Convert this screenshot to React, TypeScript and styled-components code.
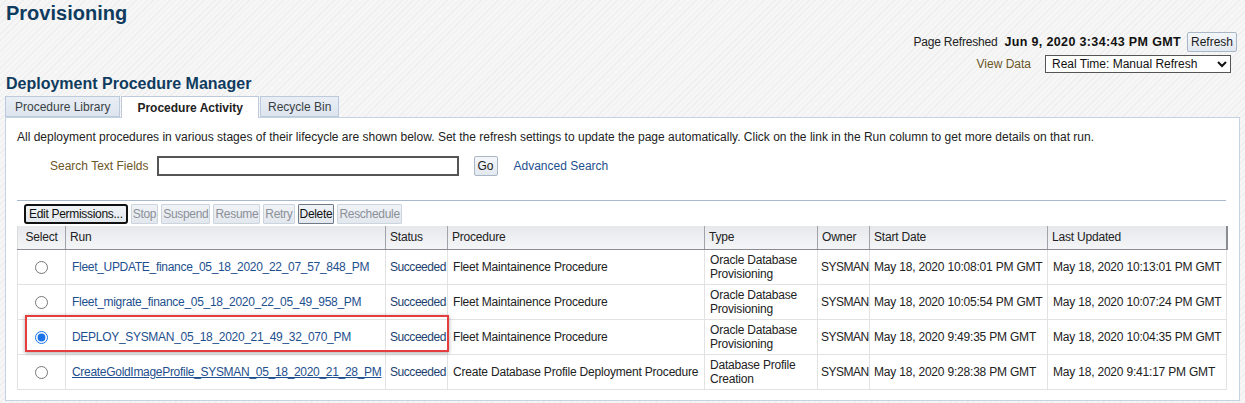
import React from "react";
import styled, { createGlobalStyle } from "styled-components";

const GlobalStyle = createGlobalStyle`
  html, body { margin: 0; padding: 0; }
  body {
    font-family: "Liberation Sans", Arial, sans-serif;
    font-size: 12px;
    color: #222;
    background-color: #f3f3f3;
    background-image: repeating-linear-gradient(135deg, #eeeeee 0 1px, #f6f6f6 1px 4px);
    width: 1245px;
    height: 403px;
    overflow: hidden;
  }
`;

const Page = styled.div`
  padding: 0 5px;
`;

const Title = styled.h1`
  margin: 0;
  padding: 1px 0 0 1px;
  font-size: 20px;
  line-height: 24px;
  font-weight: bold;
  color: #0f3b5f;
`;

const RefreshBlock = styled.div`
  display: flex;
  flex-direction: column;
  align-items: flex-end;
  margin-top: 7px;
  padding-right: 3px;
`;

const RefreshRow = styled.div<{ $inset?: number }>`
  display: flex;
  align-items: center;
  height: 20px;
  padding-right: ${(p) => p.$inset ?? 0}px;
  & + & { margin-top: 3px; height: 18px; }
`;

const Muted = styled.span`
  color: #222;
  letter-spacing: -0.2px;
  margin-right: 7px;
`;

const Stamp = styled.span`
  font-weight: bold;
  font-size: 12.5px;
  letter-spacing: 0.35px;
  color: #111;
  margin-right: 6px;
`;

const FieldLabel = styled.span`
  color: #6b5727;
  margin-right: 14px;
`;

const SmallButton = styled.button`
  font-family: "Liberation Sans", Arial, sans-serif;
  font-size: 12px;
  height: 20px;
  padding: 0 3px;
  color: #1b1b1b;
  background: linear-gradient(#f4f7fa, #e2e8ef);
  border: 1px solid #a9b6c6;
  border-radius: 2px;
`;

const ViewSelect = styled.select`
  font-family: "Liberation Sans", Arial, sans-serif;
  font-size: 12px;
  width: 186px;
  height: 18px;
  border: 1px solid #555;
  border-radius: 0;
  background: #fff;
  color: #111;
  padding: 0 2px;
`;

const SectionTitle = styled.h2`
  margin: 1px 0 3px 1px;
  font-size: 16px;
  line-height: 19px;
  font-weight: bold;
  color: #0f3b5f;
`;

const Tabs = styled.div`
  display: flex;
  gap: 1px;
  height: 21px;
  position: relative;
  z-index: 1;
`;

const Tab = styled.div<{ $active?: boolean; $pad: number }>`
  display: flex;
  align-items: center;
  padding: 0 ${(p) => p.$pad}px;
  height: ${(p) => (p.$active ? 22 : 21)}px;
  box-sizing: border-box;
  border: 1px solid #bccadb;
  border-bottom: ${(p) => (p.$active ? "none" : "1px solid #bccadb")};
  background: ${(p) => (p.$active ? "#fff" : "linear-gradient(#e9eef4, #dde5ee)")};
  color: ${(p) => (p.$active ? "#222" : "#3a3f46")};
  font-weight: ${(p) => (p.$active ? "bold" : "normal")};
  font-size: 12px;
`;

const Panel = styled.div`
  width: 1235px;
  box-sizing: border-box;
  background: #fff;
  border: 1px solid #c5d2e2;
  padding: 12px 13px 10px 11px;
`;

const Description = styled.p`
  margin: 0;
  line-height: 14px;
  color: #222;
`;

const SearchRow = styled.div`
  display: flex;
  align-items: center;
  margin-top: 12px;
  padding-left: 33px;
  height: 20px;
`;

const SearchLabel = styled.span`
  color: #6b5727;
  margin-right: 8px;
`;

const SearchInput = styled.input`
  width: 302px;
  height: 20px;
  box-sizing: border-box;
  border: 2px solid #555;
  border-radius: 0;
  margin-right: 15px;
  padding: 0 3px;
`;

const LinkText = styled.a<{ $underline?: boolean }>`
  color: #1e4f8e;
  text-decoration: ${(p) => (p.$underline ? "underline" : "none")};
  cursor: pointer;
`;

const RunLink = styled(LinkText)`
  letter-spacing: -0.3px;
`;

const Separator = styled.div`
  margin-top: 24px;
  height: 1px;
  background: #aab8cb;
`;

const Toolbar = styled.div`
  display: flex;
  gap: 3px;
  margin-top: 3px;
  padding-left: 7px;
  height: 20px;
`;

const ToolButton = styled.button<{ $state: "focus" | "enabled" | "disabled" }>`
  font-family: "Liberation Sans", Arial, sans-serif;
  font-size: 12px;
  letter-spacing: -0.3px;
  height: 20px;
  padding: 0 ${(p) => (p.$state === "focus" ? 3 : 1)}px;
  background: linear-gradient(#f0f3f6, #e3e8ee);
  border-radius: ${(p) => (p.$state === "focus" ? 3 : 1)}px;
  border: ${(p) =>
    p.$state === "focus"
      ? "2px solid #111"
      : p.$state === "enabled"
      ? "1px solid #6f7a88"
      : "1px solid #ccd4de"};
  color: ${(p) => (p.$state === "disabled" ? "#8b9099" : "#111")};
`;

const TableWrap = styled.div`
  position: relative;
  margin-top: 2px;
`;

const Grid = styled.table`
  border-collapse: collapse;
  table-layout: fixed;
  width: 1209px;
  font-size: 12px;
  letter-spacing: -0.2px;
`;

const HeadCell = styled.th<{ $center?: boolean }>`
  height: 23px;
  box-sizing: border-box;
  padding: 0 4px;
  text-align: ${(p) => (p.$center ? "center" : "left")};
  font-weight: normal;
  color: #222;
  background: linear-gradient(#e6e8ec, #f4f5f7);
  border-left: 1px solid #a2a3aa;
  border-bottom: 1px solid #8b8c93;
  white-space: nowrap;
  &:first-child { border-left: 1px solid #dcdcdc; }
  &:last-child { border-right: 2px solid #8b8c93; }
`;

const Cell = styled.td<{ $center?: boolean; $pad?: number; $tight?: boolean }>`
  height: 35px;
  box-sizing: border-box;
  padding: 0 0 0 ${(p) => (p.$center ? 0 : p.$pad ?? 5)}px;
  text-align: ${(p) => (p.$center ? "center" : "left")};
  border: 1px solid #e2e2e2;
  color: #222;
  line-height: 14px;
  white-space: nowrap;
  overflow: hidden;
  letter-spacing: ${(p) => (p.$tight ? "-0.5px" : "inherit")};
`;

const WrapCell = styled(Cell)`
  white-space: normal;
`;

const StatusText = styled.span`
  color: #1d3f70;
  letter-spacing: -0.45px;
`;

const Radio = styled.input`
  margin: 0;
  width: 13px;
  height: 13px;
  vertical-align: middle;
  accent-color: #1a73e8;
`;

const Highlight = styled.div`
  position: absolute;
  left: 8px;
  top: 89px;
  width: 424px;
  height: 37px;
  box-sizing: border-box;
  border: 2px solid #e53d3d;
  box-shadow: 0 1px 4px rgba(0, 0, 0, 0.35);
  pointer-events: none;
`;

type Row = {
  run: string;
  underline?: boolean;
  selected?: boolean;
  procedure: string;
  type: string;
  start: string;
  updated: string;
};

const rows: Row[] = [
  {
    run: "Fleet_UPDATE_finance_05_18_2020_22_07_57_848_PM",
    procedure: "Fleet Maintainence Procedure",
    type: "Oracle Database Provisioning",
    start: "May 18, 2020 10:08:01 PM GMT",
    updated: "May 18, 2020 10:13:01 PM GMT",
  },
  {
    run: "Fleet_migrate_finance_05_18_2020_22_05_49_958_PM",
    procedure: "Fleet Maintainence Procedure",
    type: "Oracle Database Provisioning",
    start: "May 18, 2020 10:05:54 PM GMT",
    updated: "May 18, 2020 10:07:24 PM GMT",
  },
  {
    run: "DEPLOY_SYSMAN_05_18_2020_21_49_32_070_PM",
    selected: true,
    procedure: "Fleet Maintainence Procedure",
    type: "Oracle Database Provisioning",
    start: "May 18, 2020 9:49:35 PM GMT",
    updated: "May 18, 2020 10:04:35 PM GMT",
  },
  {
    run: "CreateGoldImageProfile_SYSMAN_05_18_2020_21_28_PM",
    underline: true,
    procedure: "Create Database Profile Deployment Procedure",
    type: "Database Profile Creation",
    start: "May 18, 2020 9:28:38 PM GMT",
    updated: "May 18, 2020 9:41:17 PM GMT",
  },
];

const widths = [48, 320, 62, 257, 113, 52, 178, 179];

export default function App() {
  return (
    <>
      <GlobalStyle />
      <Page>
        <Title>Provisioning</Title>
        <RefreshBlock>
          <RefreshRow>
            <Muted>Page Refreshed</Muted>
            <Stamp>Jun 9, 2020 3:34:43 PM GMT</Stamp>
            <SmallButton>Refresh</SmallButton>
          </RefreshRow>
          <RefreshRow $inset={6}>
            <FieldLabel>View Data</FieldLabel>
            <ViewSelect defaultValue="rt">
              <option value="rt">Real Time: Manual Refresh</option>
            </ViewSelect>
          </RefreshRow>
        </RefreshBlock>
        <SectionTitle>Deployment Procedure Manager</SectionTitle>
        <Tabs>
          <Tab $pad={9}>Procedure Library</Tab>
          <Tab $pad={15} $active>
            Procedure Activity
          </Tab>
          <Tab $pad={7}>Recycle Bin</Tab>
        </Tabs>
        <Panel>
          <Description>
            All deployment procedures in various stages of their lifecycle are shown below. Set the refresh
            settings to update the page automatically. Click on the link in the Run column to get more details
            on that run.
          </Description>
          <SearchRow>
            <SearchLabel>Search Text Fields</SearchLabel>
            <SearchInput type="text" />
            <SmallButton style={{ marginRight: 16 }}>Go</SmallButton>
            <LinkText>Advanced Search</LinkText>
          </SearchRow>
          <Separator />
          <Toolbar>
            <ToolButton $state="focus">Edit Permissions...</ToolButton>
            <ToolButton $state="disabled">Stop</ToolButton>
            <ToolButton $state="disabled">Suspend</ToolButton>
            <ToolButton $state="disabled">Resume</ToolButton>
            <ToolButton $state="disabled">Retry</ToolButton>
            <ToolButton $state="enabled">Delete</ToolButton>
            <ToolButton $state="disabled">Reschedule</ToolButton>
          </Toolbar>
          <TableWrap>
            <Grid>
              <colgroup>
                {widths.map((w, i) => (
                  <col key={i} style={{ width: w }} />
                ))}
              </colgroup>
              <thead>
                <tr>
                  <HeadCell $center>Select</HeadCell>
                  <HeadCell>Run</HeadCell>
                  <HeadCell>Status</HeadCell>
                  <HeadCell>Procedure</HeadCell>
                  <HeadCell>Type</HeadCell>
                  <HeadCell>Owner</HeadCell>
                  <HeadCell>Start Date</HeadCell>
                  <HeadCell>Last Updated</HeadCell>
                </tr>
              </thead>
              <tbody>
                {rows.map((r) => (
                  <tr key={r.run}>
                    <Cell $center>
                      <Radio type="radio" name="sel" defaultChecked={r.selected} />
                    </Cell>
                    <Cell $pad={6}>
                      <RunLink $underline={r.underline}>{r.run}</RunLink>
                    </Cell>
                    <Cell $pad={4}>
                      <StatusText>Succeeded</StatusText>
                    </Cell>
                    <Cell $pad={5}>{r.procedure}</Cell>
                    <WrapCell>{r.type}</WrapCell>
                    <Cell $pad={3} $tight>
                      SYSMAN
                    </Cell>
                    <Cell $pad={4}>{r.start}</Cell>
                    <Cell $pad={5}>{r.updated}</Cell>
                  </tr>
                ))}
              </tbody>
            </Grid>
            <Highlight />
          </TableWrap>
        </Panel>
      </Page>
    </>
  );
}
